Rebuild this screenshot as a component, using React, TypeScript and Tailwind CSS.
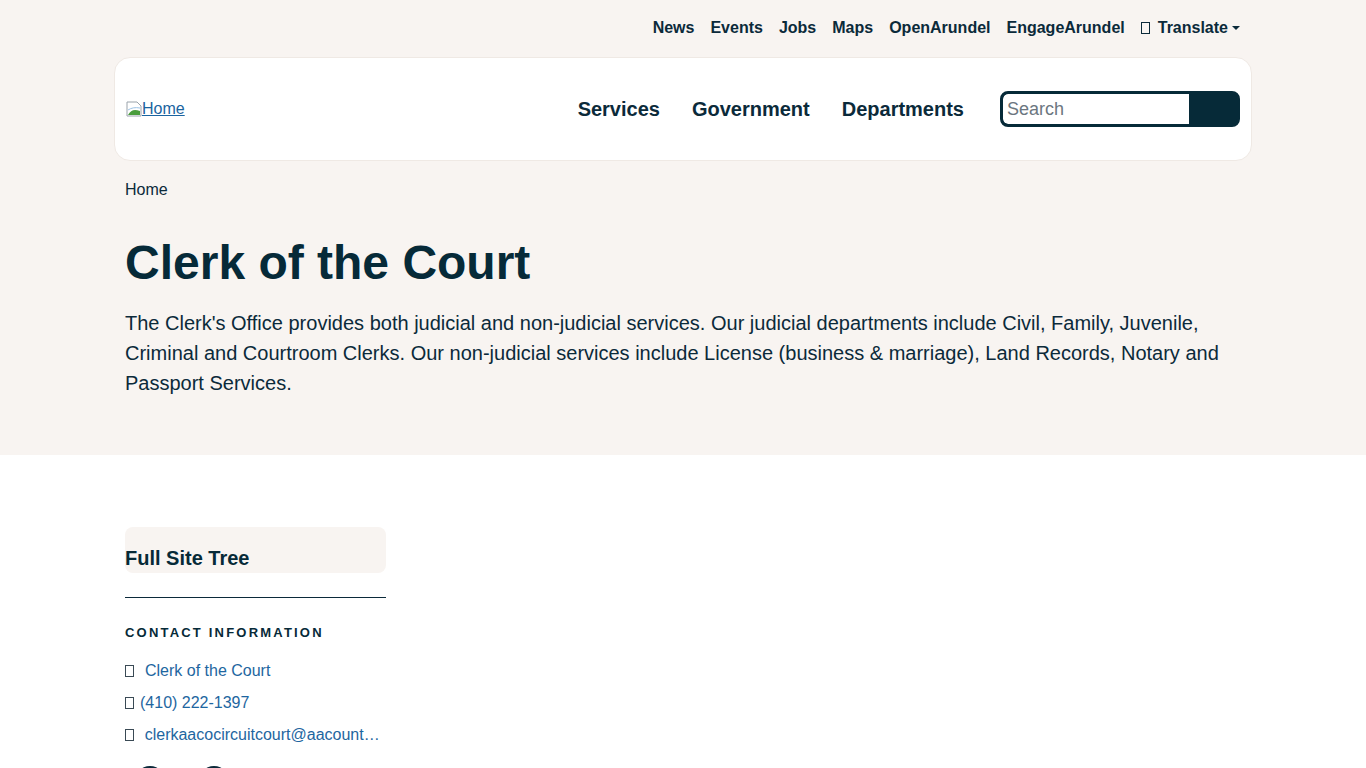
import React from "react";

const Tofu = ({ className = "" }: { className?: string }) => (
  <span className={"inline-block w-[9px] h-[12px] border border-current " + className} />
);

const App = () => {
  const topLinks = ["News", "Events", "Jobs", "Maps", "OpenArundel", "EngageArundel"];
  const mainNav = ["Services", "Government", "Departments"];

  return (
    <div className="min-h-screen bg-white text-[#0b2a3a] font-['Liberation_Sans',Arial,sans-serif]">
      <div className="bg-[#f8f4f1]">
        <div className="mx-auto w-[1138px]">
          {/* utility bar */}
          <div className="flex h-[57px] items-center justify-end gap-4 pb-[2px] pr-[12px] text-base font-bold">
            {topLinks.map((l) => (
              <a key={l} href="#" className="text-[#0b2a3a]">
                {l}
              </a>
            ))}
            <a href="#" className="flex items-center gap-2 text-[#0b2a3a]">
              <Tofu />
              <span className="flex items-center gap-1">
                Translate
                <span className="border-x-[4px] border-t-[4px] border-x-transparent border-t-[#0b2a3a]" />
              </span>
            </a>
          </div>

          {/* header card */}
          <div className="flex h-[104px] items-center rounded-2xl border border-[#efe9e4] bg-white px-[11px]">
            <a href="#" className="flex items-center text-base text-[#1a64a0] underline">
              <svg width="16" height="16" viewBox="0 0 16 16">
                <path d="M1 1h10l4 4v10H1z" fill="#fff" stroke="#9aa3ab" />
                <path d="M2 14c3-5 6-6 12-4v4z" fill="#4a9d3c" />
                <path d="M2 9c3-2 7-3 12-2" stroke="#9cc3e6" fill="none" />
              </svg>
              Home
            </a>
            <nav className="ml-auto flex items-center gap-8 text-xl font-bold">
              {mainNav.map((n) => (
                <a key={n} href="#" className="text-[#0b2a3a]">
                  {n}
                </a>
              ))}
            </nav>
            <div className="ml-9 flex h-[36px] w-[240px] overflow-hidden rounded-lg border-[3px] border-[#062a38] bg-[#062a38]">
              <input
                placeholder="Search"
                className="w-[186px] rounded-l-[5px] bg-white px-1 text-lg text-gray-700 placeholder:text-[#6b7680] outline-none"
              />
              <button className="flex-1 bg-[#062a38]" aria-label="Search" />
            </div>
          </div>

          {/* page intro */}
          <div className="px-[11px] pb-[57px]">
            <div className="pt-[21px] text-base leading-[16px]">Home</div>
            <h1 className="mt-[36px] text-[48px] font-bold leading-[58px] text-[#062a38]">Clerk of the Court</h1>
            <p className="mt-[16px] text-xl leading-[30px]">
              The Clerk's Office provides both judicial and non-judicial services. Our judicial departments include
              Civil, Family, Juvenile, Criminal and Courtroom Clerks. Our non-judicial services include License
              (business &amp; marriage), Land Records, Notary and Passport Services.
            </p>
          </div>
        </div>
      </div>

      {/* body */}
      <div className="mx-auto w-[1138px] px-[11px] pt-[72px]">
        <aside className="w-[261px]">
          <div className="flex h-[46px] items-end rounded-lg bg-[#f8f4f1] pb-[3px]">
            <h2 className="text-xl font-bold leading-6 text-[#062a38]">Full Site Tree</h2>
          </div>
          <hr className="mt-[24px] border-t border-[#0b2a3a]" />
          <h3 className="mt-[27px] text-[13px] font-bold uppercase leading-4 tracking-[2.2px] text-[#062a38]">
            Contact Information
          </h3>
          <ul className="mt-[18px] flex flex-col gap-[8px] text-base leading-6 text-[#1e66a0]">
            <li className="flex items-center gap-[11px]">
              <Tofu className="text-[#3a4a55]" />
              <a href="#">Clerk of the Court</a>
            </li>
            <li className="flex items-center gap-[6px]">
              <Tofu className="text-[#3a4a55]" />
              <a href="#">(410) 222-1397</a>
            </li>
            <li className="flex items-center gap-[11px]">
              <Tofu className="text-[#3a4a55]" />
              <a href="#" className="truncate">
                clerkaacocircuitcourt@aacounty.org
              </a>
            </li>
          </ul>
          <div className="mt-[19px] flex gap-[32px] pl-[9px]">
            <span className="h-[32px] w-[32px] rounded-full border-2 border-[#0b2a3a]" />
            <span className="h-[32px] w-[32px] rounded-full border-2 border-[#0b2a3a]" />
          </div>
        </aside>
      </div>
    </div>
  );
};

export default App;
